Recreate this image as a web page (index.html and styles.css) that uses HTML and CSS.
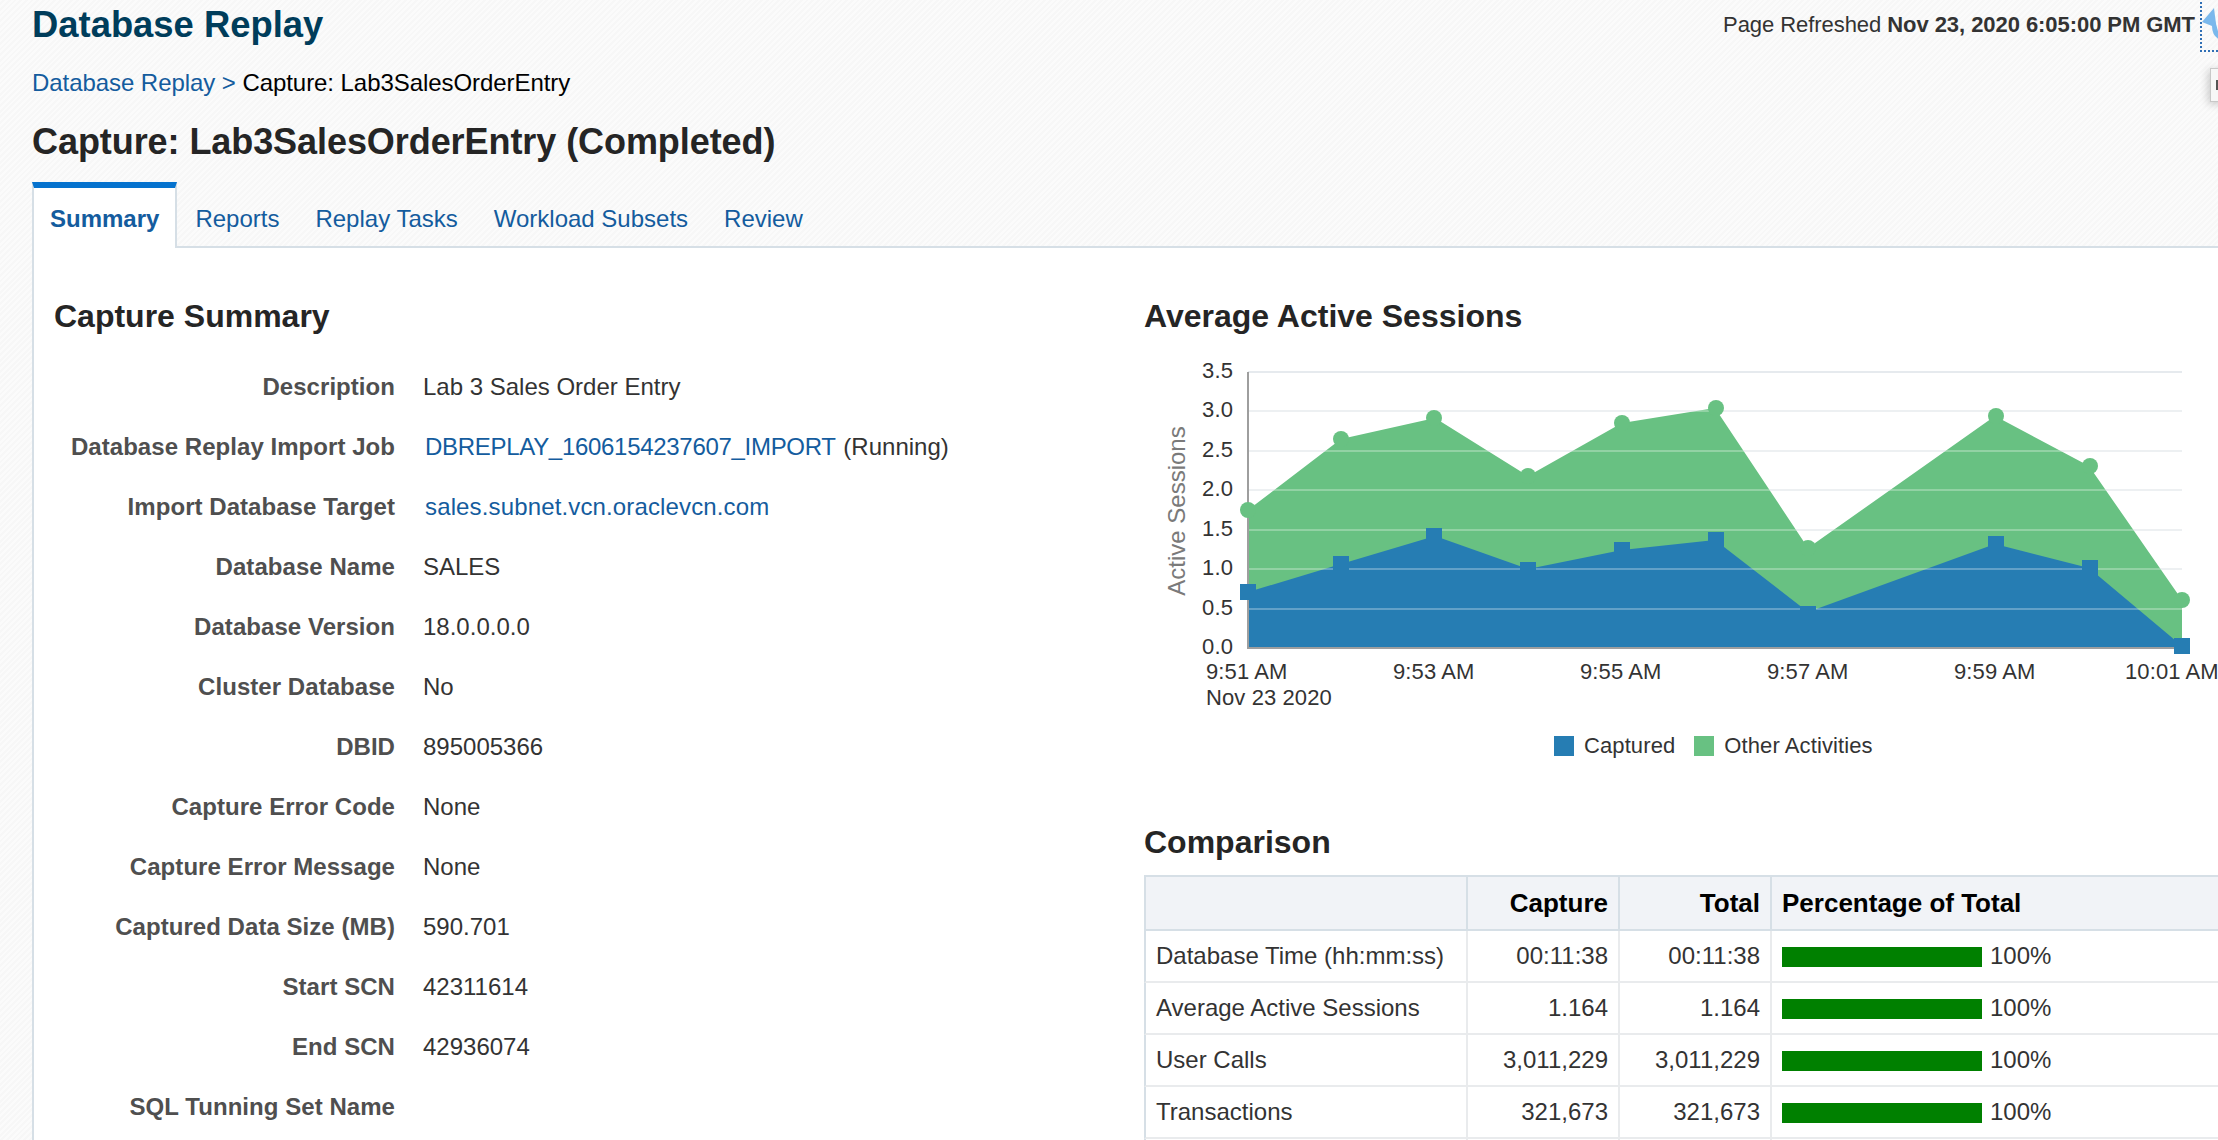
FILE: index.html
```html
<!DOCTYPE html>
<html lang="en">
  <head>
    <meta charset="UTF-8" />
    <title>Database Replay</title>
    <link rel="stylesheet" href="styles.css">
  </head>
  <body>
    <header class="page-header">
      <h1 class="page-title">Database Replay</h1>
      <div class="refreshed">Page Refreshed <b>Nov 23, 2020 6:05:00 PM GMT</b></div>
      <div class="refresh-btn">
        <svg width="18" height="48" viewBox="0 0 18 48">
          <path d="M0 22 L12 8 L13 16 Q14 28 18 36 L18 40 Q10 36 10 26 Z" fill="#7ab8ec" />
        </svg>
      </div>
      <div class="side-handle"></div>
    </header>

    <nav class="breadcrumb"><a href="#">Database Replay</a> <span class="crumb-sep">&gt;</span> Capture: Lab3SalesOrderEntry</nav>
    <h2 class="capture-title">Capture: Lab3SalesOrderEntry (Completed)</h2>

    <div class="tabs">
      <a class="tab active" href="#">Summary</a>
      <a class="tab" href="#">Reports</a>
      <a class="tab" href="#">Replay Tasks</a>
      <a class="tab" href="#">Workload Subsets</a>
      <a class="tab" href="#">Review</a>
    </div>

    <main class="panel">
      <section class="col-left">
        <h3 class="section-title">Capture Summary</h3>
        <dl class="details">
          <dt>Description</dt><dd>Lab 3 Sales Order Entry</dd>
          <dt>Database Replay Import Job</dt><dd><a class="value-link job-link" href="#">DBREPLAY_1606154237607_IMPORT</a> (Running)</dd>
          <dt>Import Database Target</dt><dd><a class="value-link target-link" href="#">sales.subnet.vcn.oraclevcn.com</a></dd>
          <dt>Database Name</dt><dd>SALES</dd>
          <dt>Database Version</dt><dd>18.0.0.0.0</dd>
          <dt>Cluster Database</dt><dd>No</dd>
          <dt>DBID</dt><dd>895005366</dd>
          <dt>Capture Error Code</dt><dd>None</dd>
          <dt>Capture Error Message</dt><dd>None</dd>
          <dt>Captured Data Size (MB)</dt><dd>590.701</dd>
          <dt>Start SCN</dt><dd>42311614</dd>
          <dt>End SCN</dt><dd>42936074</dd>
          <dt>SQL Tunning Set Name</dt><dd></dd>
        </dl>
      </section>

      <section class="col-right">
        <h3 class="section-title">Average Active Sessions</h3>

        <!-- viewBox is in page coordinates so the points read like the screenshot -->
        <svg class="chart" width="1074" height="382" viewBox="1144 340 1074 382">
          <g class="grid">
            <line x1="1248" x2="2182" y1="372" y2="372" />
            <line x1="1248" x2="2182" y1="411" y2="411" />
            <line x1="1248" x2="2182" y1="451" y2="451" />
            <line x1="1248" x2="2182" y1="490" y2="490" />
            <line x1="1248" x2="2182" y1="530" y2="530" />
            <line x1="1248" x2="2182" y1="569" y2="569" />
            <line x1="1248" x2="2182" y1="609" y2="609" />
          </g>

          <polygon class="area-other" points="1248,510 1341,439 1435,418 1528,476 1622,423 1715,408 1808,548 1995,416 2089,466 2182,600 2182,647 1248,647" />
          <polygon class="area-captured" points="1248,592 1341,564 1435,536 1528,569 1622,550 1715,540 1808,612 1995,544 2089,568 2182,646 2182,647 1248,647" />

          <g class="grid-over">
            <line x1="1248" x2="2182" y1="411" y2="411" />
            <line x1="1248" x2="2182" y1="451" y2="451" />
            <line x1="1248" x2="2182" y1="490" y2="490" />
            <line x1="1248" x2="2182" y1="530" y2="530" />
            <line x1="1248" x2="2182" y1="569" y2="569" />
            <line x1="1248" x2="2182" y1="609" y2="609" />
          </g>

          <path class="axis" d="M1248 372 V648 H2182" />

          <g class="markers-other">
            <circle cx="1248" cy="510" r="8" />
            <circle cx="1341" cy="439" r="8" />
            <circle cx="1434" cy="418" r="8" />
            <circle cx="1528" cy="476" r="8" />
            <circle cx="1622" cy="423" r="8" />
            <circle cx="1716" cy="408" r="8" />
            <circle cx="1808" cy="548" r="8" />
            <circle cx="1996" cy="416" r="8" />
            <circle cx="2090" cy="466" r="8" />
            <circle cx="2182" cy="600" r="8" />
          </g>
          <g class="markers-captured">
            <rect x="1240" y="584" width="16" height="16" />
            <rect x="1333" y="556" width="16" height="16" />
            <rect x="1426" y="528" width="16" height="16" />
            <rect x="1520" y="562" width="16" height="16" />
            <rect x="1614" y="542" width="16" height="16" />
            <rect x="1708" y="532" width="16" height="16" />
            <rect x="1800" y="606" width="16" height="16" />
            <rect x="1988" y="536" width="16" height="16" />
            <rect x="2082" y="560" width="16" height="16" />
            <rect x="2174" y="638" width="16" height="16" />
          </g>

          <g class="y-ticks">
            <text x="1233" y="378">3.5</text>
            <text x="1233" y="417">3.0</text>
            <text x="1233" y="457">2.5</text>
            <text x="1233" y="496">2.0</text>
            <text x="1233" y="536">1.5</text>
            <text x="1233" y="575">1.0</text>
            <text x="1233" y="615">0.5</text>
            <text x="1233" y="654">0.0</text>
          </g>
          <g class="x-ticks">
            <text x="1206" y="679">9:51 AM</text>
            <text x="1206" y="705">Nov 23 2020</text>
            <text x="1393" y="679">9:53 AM</text>
            <text x="1580" y="679">9:55 AM</text>
            <text x="1767" y="679">9:57 AM</text>
            <text x="1954" y="679">9:59 AM</text>
            <text x="2125" y="679">10:01 AM</text>
          </g>
          <text class="y-title" transform="translate(1185 511) rotate(-90)">Active Sessions</text>
        </svg>

        <div class="legend">
          <span class="swatch swatch-captured"></span><span class="legend-label">Captured</span>
          <span class="swatch swatch-other"></span><span class="legend-label">Other Activities</span>
        </div>

        <h3 class="section-title comparison-title">Comparison</h3>
        <table class="compare-table">
          <colgroup>
            <col class="c-name" /><col class="c-num" /><col class="c-num" /><col class="c-pct" />
          </colgroup>
          <thead>
            <tr><th></th><th class="num">Capture</th><th class="num">Total</th><th>Percentage of Total</th></tr>
          </thead>
          <tbody>
            <tr>
              <td>Database Time (hh:mm:ss)</td><td class="num">00:11:38</td><td class="num">00:11:38</td>
              <td><span class="bar"></span>100%</td>
            </tr>
            <tr>
              <td>Average Active Sessions</td><td class="num">1.164</td><td class="num">1.164</td>
              <td><span class="bar"></span>100%</td>
            </tr>
            <tr>
              <td>User Calls</td><td class="num">3,011,229</td><td class="num">3,011,229</td>
              <td><span class="bar"></span>100%</td>
            </tr>
            <tr>
              <td>Transactions</td><td class="num">321,673</td><td class="num">321,673</td>
              <td><span class="bar"></span>100%</td>
            </tr>
            <tr><td></td><td></td><td></td><td></td></tr>
          </tbody>
        </table>
      </section>
    </main>
  </body>
</html>
```

FILE: styles.css
```css
html,
body {
  height: 1140px;
  overflow: hidden;
}

body {
  margin: 0;
  font-family: "Liberation Sans", Arial, sans-serif;
  font-size: 24px;
  color: #333333;
  background: repeating-linear-gradient(135deg, #fbfbfb 0, #fbfbfb 2px, #f7f7f7 2px, #f7f7f7 4px);
}

a {
  color: #145c9e;
  text-decoration: none;
}

.page-header {
  position: relative;
  display: flex;
  justify-content: space-between;
  align-items: center;
  height: 50px;
  padding: 0 23px 0 32px;
}

.page-title {
  margin: 0;
  font-size: 36.4px;
  color: #003d5b;
}

.refreshed {
  font-size: 22px;
  letter-spacing: -0.06px;
}

.refresh-btn {
  position: absolute;
  top: -2px;
  left: 2200px;
  width: 30px;
  height: 50px;
  border: 2px dotted #2f6fb5;
}

.refresh-btn svg {
  display: block;
}

.side-handle {
  position: absolute;
  top: 68px;
  left: 2210px;
  width: 20px;
  height: 32px;
  background: #f7f7f7;
  border: 1px solid #c8c8c8;
  box-shadow: -2px 2px 8px rgba(0, 0, 0, 0.2);
}

.side-handle::before {
  content: "";
  display: block;
  width: 2px;
  height: 10px;
  margin: 11px 0 0 5px;
  background: #555555;
}

.breadcrumb {
  margin: 18px 0 0 32px;
  line-height: 30px;
  color: #000000;
  letter-spacing: -0.06px;
}

.crumb-sep {
  color: #145c9e;
}

.capture-title {
  margin: 24px 0 0 32px;
  font-size: 36px;
  line-height: 40px;
  color: #252525;
  letter-spacing: -0.07px;
}

.tabs {
  display: flex;
  height: 64px;
  margin: 20px 0 0 32px;
  border-bottom: 2px solid #d6dfe6;
}

.tab {
  padding: 0 18px;
  line-height: 74px;
}

.tab.active {
  height: 60px;
  line-height: 62px;
  padding: 0 16px;
  font-weight: bold;
  background: #ffffff;
  border-top: 6px solid #0572ce;
  border-left: 2px solid #d6dfe6;
  border-right: 2px solid #d6dfe6;
}

.panel {
  display: flex;
  height: 892px;
  margin-left: 32px;
  background: #ffffff;
  border-left: 2px solid #d6dfe6;
}

.col-left {
  flex: none;
  width: 1090px;
  padding: 48px 0 0 20px;
}

.col-right {
  flex: none;
  width: 1100px;
  padding-top: 48px;
}

.section-title {
  margin: 0;
  font-size: 32px;
  line-height: 40px;
  color: #252525;
}

.details {
  display: grid;
  grid-template-columns: 341px 1fr;
  grid-auto-rows: 60px;
  column-gap: 28px;
  align-items: center;
  margin: 21px 0 0;
}

.details dt {
  font-weight: bold;
  text-align: right;
  color: #4f4f4f;
  letter-spacing: 0.05px;
}

.details dd {
  margin: 0;
}

.value-link {
  margin-left: 2px;
}

.job-link {
  margin-right: 1px;
  letter-spacing: -0.3px;
}

.target-link {
  letter-spacing: 0.14px;
}

.chart {
  display: block;
  margin-top: 4px;
}

.grid line {
  stroke: #e6eaee;
  stroke-width: 2;
}

.grid-over line {
  stroke: rgba(255, 255, 255, 0.28);
  stroke-width: 2;
}

.area-other,
.markers-other circle {
  fill: #68c182;
}

.area-captured,
.markers-captured rect {
  fill: #267db3;
}

.axis {
  fill: none;
  stroke: #9e9e9e;
  stroke-width: 2;
}

.y-ticks text,
.x-ticks text {
  font-size: 22px;
  fill: #333333;
  letter-spacing: 0.1px;
}

.y-ticks text {
  text-anchor: end;
}

.y-title {
  font-size: 24px;
  fill: #7a7a7a;
  text-anchor: middle;
}

.legend {
  display: flex;
  align-items: center;
  height: 30px;
  margin-top: 9px;
  padding-left: 410px;
  font-size: 22px;
  letter-spacing: 0.1px;
}

.swatch {
  flex: none;
  width: 20px;
  height: 20px;
  margin-right: 10px;
}

.swatch-captured {
  background: #267db3;
}

.swatch-other {
  background: #68c182;
}

.legend-label {
  margin-right: 19px;
}

.comparison-title {
  margin-top: 61px;
}

.compare-table {
  table-layout: fixed;
  width: 1200px;
  margin-top: 13px;
  border-collapse: separate;
  border-spacing: 0;
}

.c-name {
  width: 324px;
}

.c-num {
  width: 152px;
}

.compare-table th,
.compare-table td {
  box-sizing: border-box;
  padding: 0 10px;
  text-align: left;
}

.compare-table th {
  height: 56px;
  font-size: 26px;
  color: #000000;
  background: #f1f3f7;
  border-top: 2px solid #d6dfe6;
  border-bottom: 2px solid #d6dfe6;
  border-right: 2px solid #d6dfe6;
}

.compare-table td {
  height: 52px;
  border-bottom: 2px solid #e9ebed;
  border-right: 2px solid #e9ebed;
}

.compare-table th:first-child,
.compare-table td:first-child {
  border-left: 2px solid #d6dfe6;
}

.compare-table .num {
  text-align: right;
}

.bar {
  display: inline-block;
  width: 200px;
  height: 20px;
  margin-right: 8px;
  vertical-align: -3px;
  background: #008000;
}
```
